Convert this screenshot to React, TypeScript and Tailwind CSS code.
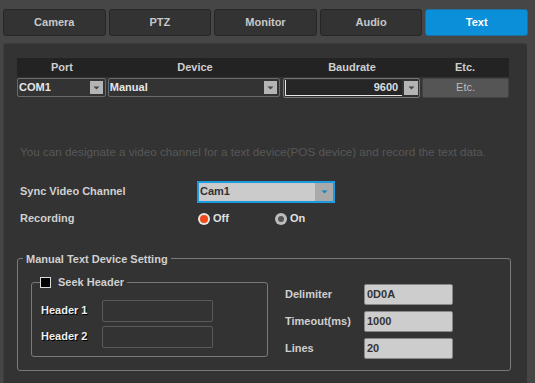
import React from 'react';

const font = { fontFamily: '"Liberation Sans", Arial, sans-serif' };

const tabs = ['Camera', 'PTZ', 'Monitor', 'Audio', 'Text'];

const Arrow: React.FC<{ color?: string }> = ({ color = '#444' }) => (
  <svg width="7" height="4" viewBox="0 0 7 4">
    <path d="M0.5 0.5 L6.5 0.5 L3.5 3.5 Z" fill={color} />
  </svg>
);

const DarkSelect: React.FC<{ value: string; className?: string }> = ({ value, className }) => (
  <div className={`flex items-center h-[19px] border border-[#6a6a6a] rounded-[2px] bg-[#333] pl-[1px] pr-[2px] ${className}`}>
    <span className="flex-1 text-[11px] font-bold text-[#e6e6e6]">{value}</span>
    <span className="w-[13px] h-[13px] bg-[#b4b4b4] flex items-center justify-center">
      <Arrow />
    </span>
  </div>
);

const LightInput: React.FC<{ value: string }> = ({ value }) => (
  <div className="w-[89px] h-[21px] bg-[#cdcdcd] border border-[#888] rounded-[2px] flex items-center px-[2px] text-[11px] font-bold text-[#333]">
    {value}
  </div>
);

export default function App() {
  return (
    <div className="w-[535px] h-[383px] bg-[#464646] overflow-hidden" style={font}>
      {/* Tabs */}
      <div className="flex gap-[3px] pl-[3px] pt-[9px] w-[528px]">
        {tabs.map((t) => (
          <div
            key={t}
            className={`flex-1 h-[27px] rounded-[3px] border flex items-center justify-center text-[11px] font-bold ${
              t === 'Text'
                ? 'bg-[#0a8fd8] border-[#1f6fa0] text-white'
                : 'bg-[#333] border-[#262626] text-[#c8c8c8]'
            }`}
          >
            {t}
          </div>
        ))}
      </div>

      {/* Panel */}
      <div className="ml-[3px] mt-[7px] w-[524px] h-[340px] bg-[#333] rounded-t-[3px] border-t border-l border-[#3d3d3d] pl-[13px] pt-[14px]">
        {/* Port table */}
        <div className="w-[492px]">
          <div className="flex h-[19px] bg-[#232323] text-[11px] font-bold text-[#cfcfcf] items-center">
            <div className="w-[90px] text-center">Port</div>
            <div className="w-[176px] text-center">Device</div>
            <div className="w-[138px] text-center">Baudrate</div>
            <div className="w-[88px] text-center">Etc.</div>
          </div>
          <div className="flex items-center h-[21px] gap-[1px]">
            <DarkSelect value="COM1" className="w-[89px]" />
            <DarkSelect value="Manual" className="w-[173px] ml-[1px]" />
            <div className="ml-[2px] w-[137px] h-[20px] border border-[#777] rounded-[2px] flex items-center p-[1px] gap-[2px]">
              <div className="flex-1 h-full bg-[#262626] border-l border-b border-[#e8e8e8] flex items-center justify-end pr-[4px] text-[11px] font-bold text-[#ddd]">
                9600
              </div>
              <span className="w-[14px] h-[14px] bg-[#b4b4b4] flex items-center justify-center">
                <Arrow />
              </span>
            </div>
            <div className="ml-[1px] w-[87px] h-[20px] bg-[#555] border border-[#444] rounded-[2px] flex items-center justify-center text-[11px] text-[#bbb]">
              Etc.
            </div>
          </div>
        </div>

        <p className="mt-[45px] pl-[3px] text-[11.7px] text-[#585858]">
          You can designate a video channel for a text device(POS device) and record the text data.
        </p>

        {/* Sync video channel */}
        <div className="mt-[20px] flex items-center pl-[3px]">
          <span className="w-[177px] text-[11px] font-bold text-[#d0d0d0]">Sync Video Channel</span>
          <div className="w-[138px] h-[22px] bg-[#cbcbcb] border-2 border-[#1e9be0] flex items-center pl-[1px]">
            <span className="flex-1 text-[11px] font-bold text-[#333]">Cam1</span>
            <span className="w-[18px] h-full bg-[#a9a9a9] flex items-center justify-center">
              <Arrow color="#1683c8" />
            </span>
          </div>
        </div>

        <div className="mt-[7px] flex items-center pl-[3px] h-[18px]">
          <span className="w-[178px] text-[11px] font-bold text-[#d0d0d0]">Recording</span>
          <div className="flex items-center w-[77px]">
            <span className="w-[12px] h-[12px] rounded-full bg-[#e6e6e6] flex items-center justify-center">
              <span className="w-[8px] h-[8px] rounded-full bg-[#f04818]" />
            </span>
            <span className="ml-[3px] text-[11px] font-bold text-[#e0e0e0]">Off</span>
          </div>
          <div className="flex items-center">
            <span className="w-[12px] h-[12px] rounded-full bg-[#bdbdbd] flex items-center justify-center">
              <span className="w-[6px] h-[6px] rounded-full bg-[#555]" />
            </span>
            <span className="ml-[3px] text-[11px] font-bold text-[#e0e0e0]">On</span>
          </div>
        </div>

        {/* Manual text device setting */}
        <fieldset className="mt-[23px] w-[494px] h-[120px] border border-[#7a7a7a] rounded-[3px]">
          <legend className="ml-[5px] px-[3px] text-[11px] font-bold text-[#d0d0d0]">Manual Text Device Setting</legend>
          <div className="flex pl-[13px]">
            <fieldset className="mt-[7px] w-[237px] h-[83px] border border-[#7a7a7a] rounded-[3px]">
              <legend className="ml-[8px] pr-[3px] flex items-center gap-[7px] text-[11px] font-bold text-[#d0d0d0]">
                <span className="w-[11px] h-[11px] bg-black border border-[#ddd]" />
                Seek Header
              </legend>
              <div className="mt-[9px] pl-[9px] flex flex-col gap-[4px]">
                {['Header 1', 'Header 2'].map((h) => (
                  <div key={h} className="flex items-center">
                    <span className="w-[61px] text-[11px] font-bold text-[#eee] [text-shadow:1px_1px_0_#000]">{h}</span>
                    <div className="w-[111px] h-[22px] border border-[#5a5a5a] rounded-[2px]" />
                  </div>
                ))}
              </div>
            </fieldset>
            <div className="ml-[17px] mt-[17px] flex flex-col gap-[6px]">
              {[
                ['Delimiter', '0D0A'],
                ['Timeout(ms)', '1000'],
                ['Lines', '20'],
              ].map(([l, v]) => (
                <div key={l} className="flex items-center">
                  <span className="w-[79px] text-[11px] font-bold text-[#cfcfcf]">{l}</span>
                  <LightInput value={v} />
                </div>
              ))}
            </div>
          </div>
        </fieldset>
      </div>
    </div>
  );
}
